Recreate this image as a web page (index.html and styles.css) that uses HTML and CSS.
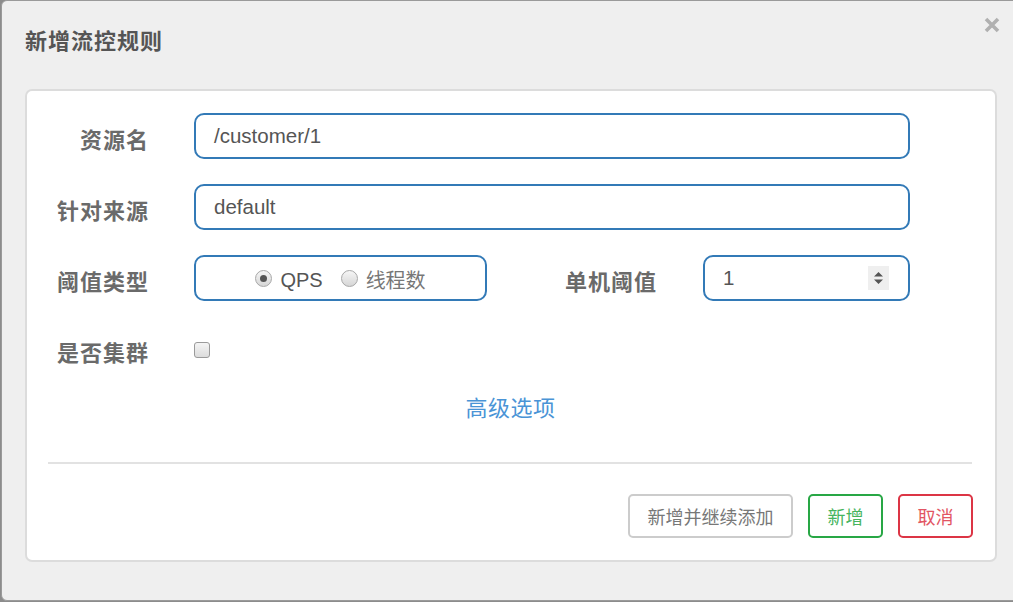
FILE: index.html
```html
<!DOCTYPE html>
<html lang="zh-CN">
<head>
<meta charset="utf-8">
<title>新增流控规则</title>
<link rel="stylesheet" href="styles.css">
</head>
<body>
<div class="modal">
  <div class="modal-header">
    <h4 class="modal-title">新增流控规则</h4>
    <button class="close" type="button" aria-label="关闭">
      <svg width="16" height="16" viewBox="0 0 16 16"><path d="M2 2 L14 14 M14 2 L2 14" stroke="#b0b0b0" stroke-width="3.6" stroke-linecap="butt"/></svg>
    </button>
  </div>
  <div class="panel">
    <div class="form-row">
      <label class="label">资源名</label>
      <div class="field wide">/customer/1</div>
    </div>
    <div class="form-row">
      <label class="label">针对来源</label>
      <div class="field wide">default</div>
    </div>
    <div class="form-row">
      <label class="label">阈值类型</label>
      <div class="field radio-box">
        <span class="radio checked"></span><span class="radio-text">QPS</span>
        <span class="radio"></span><span class="radio-text muted">线程数</span>
      </div>
      <label class="label label-2">单机阈值</label>
      <div class="field number">
        <span class="num-val">1</span>
        <span class="stepper">
          <svg width="21" height="24" viewBox="0 0 21 24"><path d="M6 10.5 L10.5 6 L15 10.5 Z M6 13.5 L15 13.5 L10.5 18 Z" fill="#555"/></svg>
        </span>
      </div>
    </div>
    <div class="form-row">
      <label class="label">是否集群</label>
      <span class="checkbox"></span>
    </div>
    <div class="advanced"><a class="link">高级选项</a></div>
    <div class="divider"></div>
    <div class="actions">
      <button class="btn btn-default" type="button">新增并继续添加</button>
      <button class="btn btn-success" type="button">新增</button>
      <button class="btn btn-danger" type="button">取消</button>
    </div>
  </div>
</div>
</body>
</html>
```
FILE: styles.css
```css
html, body {
  margin: 0;
  padding: 0;
  height: 602px;
  overflow: hidden;
  background: #8c8c8c;
  font-family: "Noto Sans CJK SC", "Liberation Sans", sans-serif;
}

.modal {
  margin-left: 1px;
  width: 1020px;
  height: 599px;
  border: 1px solid #9a9a9a;
  border-radius: 6px;
  background: #efefef;
}

.modal-header {
  height: 88px;
  display: flex;
  justify-content: space-between;
  align-items: flex-start;
  padding: 0 13px 0 23px;
  box-sizing: border-box;
  width: 1011px;
}

.modal-title {
  margin: 23px 0 0 0;
  font-size: 22px;
  line-height: 30px;
  letter-spacing: 1px;
  font-weight: 700;
  color: #555;
}

.close {
  margin-top: 16px;
  padding: 0;
  border: 0;
  background: transparent;
  width: 16px;
  height: 16px;
  display: block;
}
.close svg { display: block; }

.panel {
  margin-left: 23px;
  width: 972px;
  height: 473px;
  box-sizing: border-box;
  border: 2px solid #dcdcdc;
  border-radius: 7px;
  background: #fff;
  padding: 22px 22px 22px 21px;
  display: flex;
  flex-direction: column;
}

.form-row {
  display: flex;
  align-items: center;
  height: 46px;
  margin-bottom: 25px;
}
.form-row:nth-child(4) { margin-bottom: 0; }

.label {
  width: 101px;
  flex: none;
  text-align: right;
  font-size: 22px;
  letter-spacing: 1px;
  font-weight: 700;
  color: #6a6a6a;
  margin-right: 45px;
  line-height: 30px;
  padding-top: 3px;
}

.label-2 {
  width: 170px;
  margin-right: 46px;
}

.field {
  height: 46px;
  box-sizing: border-box;
  border: 2px solid #337ab7;
  border-radius: 10px;
  display: flex;
  align-items: center;
  padding: 0 18px;
  font-family: "Liberation Sans", "Noto Sans CJK SC", sans-serif;
  font-size: 20.5px;
  color: #555;
}

.wide { width: 716px; }

.radio-box {
  width: 293px;
  justify-content: center;
  padding: 0;
}

.radio {
  width: 17px;
  height: 17px;
  box-sizing: border-box;
  border: 1px solid #a8a8a8;
  border-radius: 50%;
  background: linear-gradient(#f6f6f6, #d6d6d6);
  display: inline-flex;
  align-items: center;
  justify-content: center;
  margin-right: 8px;
  margin-top: 1px;
}
.radio.checked::after {
  content: "";
  width: 7px;
  height: 7px;
  border-radius: 50%;
  background: #555;
}

.radio-text {
  font-size: 20px;
  color: #555;
  margin-right: 18px;
  line-height: 24px;
  padding-top: 4px;
}
.radio-text.muted {
  color: #777;
  margin-right: 0;
  font-family: "Noto Sans CJK SC", sans-serif;
}

.number {
  width: 207px;
  justify-content: space-between;
  padding: 0 19px 0 18px;
}
.stepper {
  width: 21px;
  height: 24px;
  background: #efefef;
  display: block;
}
.stepper svg { display: block; }

.checkbox {
  width: 16px;
  height: 16px;
  box-sizing: border-box;
  border: 1px solid #9a9a9a;
  border-radius: 3px;
  background: linear-gradient(#f4f4f4, #dcdcdc);
  margin-top: 2px;
}

.advanced {
  margin-top: 19px;
  text-align: center;
  height: 30px;
  line-height: 30px;
}
.link {
  font-size: 22px;
  letter-spacing: 0.5px;
  color: #4a94d6;
  cursor: pointer;
}

.divider {
  margin-top: 41px;
  height: 2px;
  background: #e2e2e2;
  width: 924px;
}

.actions {
  margin-top: 30px;
  display: flex;
  justify-content: flex-end;
  gap: 15px;
}

.btn {
  height: 44px;
  box-sizing: border-box;
  border: 2px solid #ccc;
  border-radius: 5px;
  background: #fff;
  font-family: "Noto Sans CJK SC", sans-serif;
  font-size: 18px;
  padding: 0;
  line-height: 40px;
}
.btn-default { width: 165px; color: #777; border-color: #cccccc; }
.btn-success { width: 75px; color: #46b45e; border-color: #28a745; }
.btn-danger { width: 75px; color: #e25563; border-color: #dc3545; }
```
